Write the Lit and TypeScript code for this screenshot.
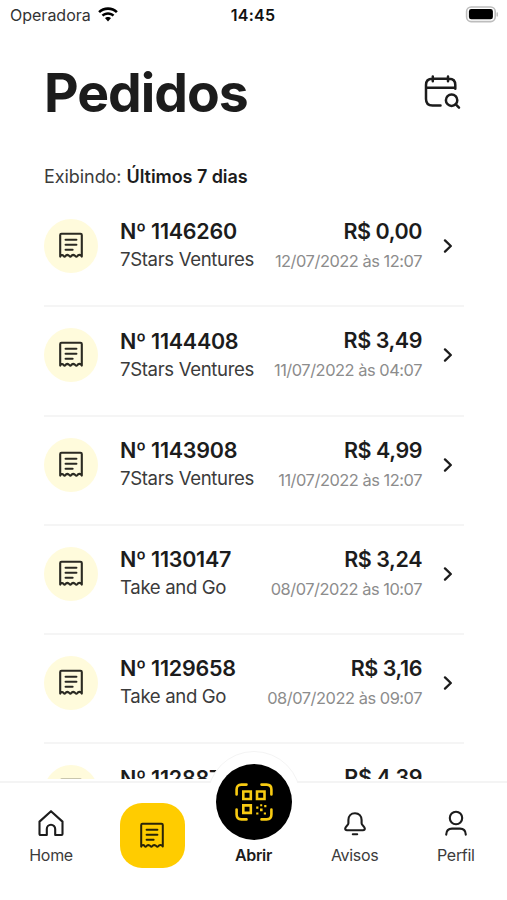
import { LitElement, html, css, svg } from "lit";
import { customElement, property } from "lit/decorators.js";

interface Order {
  id: string;
  store: string;
  total: string;
  date: string;
}

const orders: Order[] = [
  { id: "1146260", store: "7Stars Ventures", total: "0,00", date: "12/07/2022 às 12:07" },
  { id: "1144408", store: "7Stars Ventures", total: "3,49", date: "11/07/2022 às 04:07" },
  { id: "1143908", store: "7Stars Ventures", total: "4,99", date: "11/07/2022 às 12:07" },
  { id: "1130147", store: "Take and Go", total: "3,24", date: "08/07/2022 às 10:07" },
  { id: "1129658", store: "Take and Go", total: "3,16", date: "08/07/2022 às 09:07" },
  { id: "1128873", store: "", total: "4,39", date: "" },
];

const receipt = svg`
  <path d="M2.2 24.6V3Q2.2 1.7 3.5 1.7H22.5Q23.8 1.7 23.8 3V24.6Q22.8 22.8 21.3 22.9Q20 23 19.3 24.2Q18.4 25.3 17.4 24.1Q16.5 22.9 15.2 22.9Q14 23 13.2 24.2Q12.4 25.2 11.5 24.1Q10.5 22.9 9.3 22.9Q8.2 23 7.4 24.2Q6.6 25.2 5.7 24.1Q4.7 22.8 3.7 23.1Q2.7 23.5 2.2 24.6Z"/>
  <path d="M7.6 7.7H18.4M7.6 12.8H18.4M7.6 17.8H14.6"/>`;

@customElement("order-row")
class OrderRow extends LitElement {
  @property({ attribute: false }) order!: Order;

  static styles = css`
    :host {
      display: flex;
      align-items: center;
      box-sizing: border-box;
      flex: none;
      height: 109.25px;
      padding-bottom: 11px;
      border-bottom: 2px solid #f5f5f5;
    }
    svg { fill: none; stroke: currentColor; stroke-width: 2.1; stroke-linecap: round; stroke-linejoin: round; display: block; }
    .badge {
      width: 54px;
      height: 54px;
      border-radius: 50%;
      background: #fffbdc;
      color: #2b2a22;
      display: grid;
      place-items: center;
      margin-right: 22px;
      flex: none;
    }
    .badge svg { margin-bottom: 2px; }
    .info, .amount { white-space: nowrap; }
    .info { letter-spacing: -0.26px; margin-bottom: 1.5px; }
    .amount { margin-left: auto; text-align: right; margin-right: 20.5px; }
    .strong { font-weight: 600; font-size: 21.5px; line-height: 28px; height: 28px; color: #1c1c1c; }
    .amount .strong { letter-spacing: -0.45px; }
    .store { font-size: 18.6px; line-height: 28px; height: 28px; color: #3b3b3b; letter-spacing: -0.35px; }
    .date { font-size: 16.4px; line-height: 32px; height: 30px; color: #8c8c8c; letter-spacing: -0.46px; }
    .chev { margin-right: 11.5px; color: #1c1c1c; stroke-width: 2.3; }
  `;

  render() {
    const o = this.order;
    return html`
      <div class="badge"><svg width="26" height="26" viewBox="0 0 26 26">${receipt}</svg></div>
      <div class="info">
        <div class="strong">Nº ${o.id}</div>
        <div class="store">${o.store}</div>
      </div>
      <div class="amount">
        <div class="strong">R$ ${o.total}</div>
        <div class="date">${o.date}</div>
      </div>
      <svg class="chev" width="10" height="14" viewBox="0 0 10 14"><path d="M2 1.4 7.8 7 2 12.6"/></svg>`;
  }
}

@customElement("app-root")
class AppRoot extends LitElement {
  static styles = css`
    :host {
      display: flex;
      flex-direction: column;
      width: 507px;
      height: 900px;
      overflow: hidden;
      background: #fff;
      color: #1c1c1c;
      font-family: Inter, "Liberation Sans", sans-serif;
    }
    svg { fill: none; stroke: currentColor; stroke-linecap: round; stroke-linejoin: round; display: block; }
    .status {
      display: grid;
      grid-template-columns: 1fr auto 1fr;
      align-items: center;
      height: 29px;
      padding: 0 9px 0 10px;
      font-size: 16px;
      flex: none;
    }
    .carrier { display: flex; align-items: center; gap: 7px; color: #333; }
    .carrier svg { fill: #000; stroke: none; }
    .time { font-weight: 600; color: #111; letter-spacing: 0.3px; margin-right: 2px; }
    .battery { justify-self: end; }
    header {
      display: flex;
      justify-content: space-between;
      align-items: center;
      height: 129px;
      padding: 0 46px 0 44px;
      flex: none;
    }
    h1 { margin: 0 0 1px; font-size: 53.5px; line-height: 64px; font-weight: 700; letter-spacing: -1px; }
    header svg { margin-bottom: 4px; }
    .filter { padding: 0 44px; height: 40px; line-height: 38px; font-size: 18px; flex: none; color: #3b3b3b; letter-spacing: -0.06px; }
    .filter b { font-weight: 600; color: #1c1c1c; }
    .list { height: 581px; padding: 0 43px 0 44px; overflow: hidden; display: flex; flex-direction: column; flex: none; }
    nav {
      position: relative;
      height: 117px;
      margin-top: 2px;
      border-top: 2px solid #f4f4f4;
      display: grid;
      grid-template-columns: repeat(5, 101.2px);
      padding-left: 0.5px;
      flex: none;
      background: #fff;
    }
    .tab {
      display: flex;
      flex-direction: column;
      align-items: center;
      font-size: 16px;
      line-height: 20px;
      color: #3b3b3b;
      padding-top: 26px;
      letter-spacing: -0.3px;
    }
    .tab svg { color: #1c1c1c; margin-bottom: 8px; }
    .tab.current { padding-top: 20px; }
    .tile { width: 65px; height: 65px; border-radius: 22px; background: #ffcc00; display: grid; place-items: center; }
    .tab .tile svg { margin: 0 0 2px; color: #2a2408; }
    .tab.open { padding-top: 62px; font-weight: 600; color: #1c1c1c; }
    .halo {
      position: absolute;
      left: 207px;
      top: -32px;
      width: 94px;
      height: 94px;
      box-sizing: border-box;
      border-radius: 50%;
      border: 1.5px solid #f4f4f4;
      background: #fff;
      clip-path: inset(0 0 62px 0);
    }
    .scan {
      position: absolute;
      left: 216px;
      top: -19px;
      width: 76px;
      height: 76px;
      border-radius: 50%;
      background: #000;
      display: grid;
      place-items: center;
    }
    .scan svg { color: #f8cb12; }
  `;

  render() {
    return html`
      <div class="status">
        <div class="carrier">Operadora
          <svg width="20" height="15" viewBox="0 0 20 15">
            <path d="M10 0.3C13.8 0.3 17.2 1.8 19.8 4.2L18 6.1C15.9 4.1 13.1 2.9 10 2.9S4.1 4.1 2 6.1L0.2 4.2C2.8 1.8 6.2 0.3 10 0.3Z"/>
            <path d="M10 5.2C12.5 5.2 14.7 6.2 16.4 7.8L14.6 9.6C13.4 8.4 11.8 7.7 10 7.7S6.6 8.4 5.4 9.6L3.6 7.8C5.3 6.2 7.5 5.2 10 5.2Z"/>
            <path d="M10 9.9C11.2 9.9 12.3 10.4 13.1 11.1L10 14.4L6.9 11.1C7.7 10.4 8.8 9.9 10 9.9Z"/>
          </svg>
        </div>
        <div class="time">14:45</div>
        <svg class="battery" width="33" height="17" viewBox="0 0 33 17">
          <rect x="1.6" y="1" width="28.6" height="14.6" rx="4.5" stroke="#bdbdbd" stroke-width="1.6"/>
          <rect x="3.9" y="3.1" width="24" height="10.2" rx="2.4" fill="#000" stroke="none"/>
          <path d="M32.2 6.9V9.9" stroke="#bdbdbd" stroke-width="1.4"/>
        </svg>
      </div>
      <header>
        <h1>Pedidos</h1>
        <svg width="38" height="36" viewBox="0 0 38 36" stroke-width="2.5">
          <path d="M17.5 31.5H9.5Q3 31.5 3 25V11Q3 4.8 9.5 4.8H26Q32.3 4.8 32.3 11V14.8M3 13.7H32.3M9.8 2.4V7.2M25 2.4V7.2"/>
          <circle cx="28.6" cy="26.2" r="5.7"/><path d="M32.8 30.4 36 33.6"/>
        </svg>
      </header>
      <div class="filter">Exibindo: <b>Últimos 7 dias</b></div>
      <div class="list">${orders.map((o) => html`<order-row .order=${o}></order-row>`)}</div>
      <nav>
        <div class="tab">
          <svg width="28" height="28" viewBox="0 0 28 28" stroke-width="2.1">
            <path d="M3.5 26Q2.5 26 2.5 25V12.6L14 2.2 25.5 12.6V25Q25.5 26 24.5 26H18.2V20A4.2 4.2 0 0 0 9.8 20V26Z"/>
          </svg>Home
        </div>
        <div class="tab current">
          <div class="tile"><svg width="26" height="26" viewBox="0 0 26 26" stroke-width="2">${receipt}</svg></div>
        </div>
        <div class="tab open">Abrir</div>
        <div class="tab">
          <svg width="28" height="28" viewBox="0 0 28 28" stroke-width="2.1">
            <path d="M14 4.2C9.9 4.2 7.4 7 7.4 11V14.2C7.4 16.2 4.2 17.2 4.2 19.6Q4.2 21.2 6 21.2H22Q23.8 21.2 23.8 19.6C23.8 17.2 20.6 16.2 20.6 14.2V11C20.6 7 18.1 4.2 14 4.2ZM11.8 25.2H16.2"/>
          </svg>Avisos
        </div>
        <div class="tab">
          <svg width="28" height="28" viewBox="0 0 28 28" stroke-width="2.1">
            <circle cx="14" cy="9" r="6.2"/><path d="M4.2 25.6C4.4 21.6 6.6 19.6 10 19.6H18C21.4 19.6 23.6 21.6 23.8 25.6"/>
          </svg>Perfil
        </div>
        <div class="halo"></div>
        <div class="scan">
          <svg width="38" height="38" viewBox="0 0 38 38" stroke-width="2.6">
            <path d="M1.6 11.5V6.4Q1.6 1.6 6.4 1.6H11.5M26.5 1.6H31.6Q36.4 1.6 36.4 6.4V11.5M1.6 26.5V31.6Q1.6 36.4 6.4 36.4H11.5M26.5 36.4H31.6Q36.4 36.4 36.4 31.6V26.5"/>
            <path stroke-linejoin="miter" d="M8.3 8.5H15.8V16H8.3ZM22 8.5H29.5V16H22ZM8.3 22.4H15.8V29.9H8.3Z"/>
            <path fill="currentColor" stroke="none" d="M21.2 23.6h2.2v2.2h-2.2ZM25.2 21.2h2v2h-2ZM29.2 22h2.2v2.2h-2.2ZM25 25.6h2.6v2.6H25ZM28.8 29.4h2.2v2.2h-2.2ZM21.2 29.4h2.2v2.2h-2.2Z"/>
          </svg>
        </div>
      </nav>`;
  }
}
